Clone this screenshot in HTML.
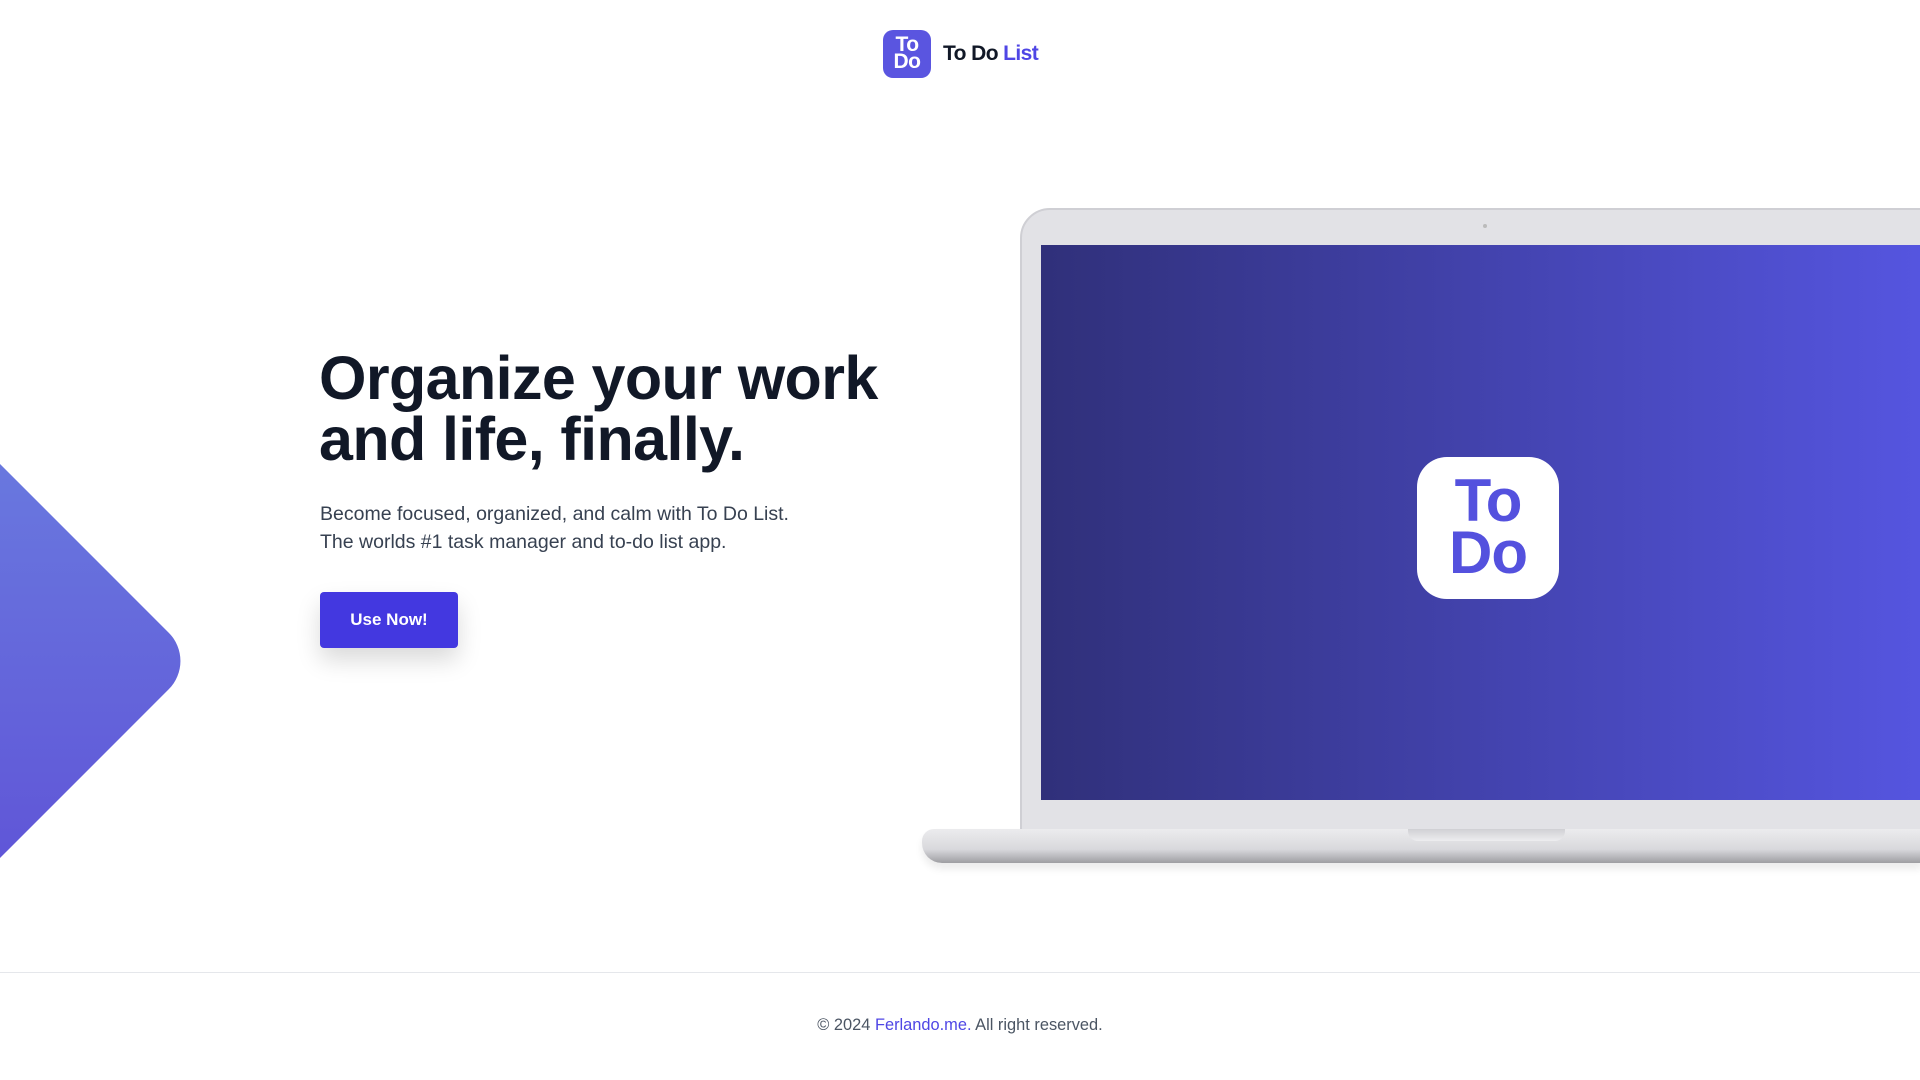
<!DOCTYPE html>
<html><head><meta charset="utf-8"><style>
*{margin:0;padding:0;box-sizing:border-box}
body{width:1920px;height:1080px;overflow:hidden;background:#fff;font-family:"Liberation Sans",Arial,sans-serif;position:relative}
.logo{position:absolute;left:883px;top:30px;width:48px;height:48px;border-radius:10px;background:#5a55e0;color:#fff;font-weight:bold;font-size:21px;line-height:17px;text-align:center;padding-top:6px;letter-spacing:-0.5px}
.brand{position:absolute;left:943px;top:42px;font-size:21px;font-weight:bold;color:#111827;letter-spacing:-0.6px}
.brand span{color:#4f46e5}
h1{position:absolute;left:319px;top:348px;font-size:61px;line-height:61px;font-weight:bold;color:#111827;letter-spacing:-0.6px}
p.sub{position:absolute;left:320px;top:500px;font-size:19.5px;line-height:28px;color:#374151}
.btn{position:absolute;left:320px;top:592px;width:138px;height:56px;background:#4338e0;border-radius:4px;color:#fff;font-weight:bold;font-size:17px;text-align:center;line-height:56px;box-shadow:0 12px 24px rgba(0,0,0,.15)}
.diamond{position:absolute;left:-281px;top:463px;width:396px;height:396px;transform:rotate(45deg);transform-origin:center;border-radius:40px;background:linear-gradient(315deg,#5e4fd6,#6b7fe0)}
.dwrap{position:absolute;left:0;top:0;width:400px;height:1000px;overflow:hidden}
.bezel{position:absolute;left:1020px;top:208px;width:960px;height:624px;background:#e2e2e6;border:2px solid #cfcfd4;border-radius:30px 0 0 0}
.screen{position:absolute;left:1041px;top:245px;width:900px;height:555px;background:linear-gradient(90deg,#30307a,#5656e2)}
.cam{position:absolute;left:1483px;top:224px;width:4px;height:4px;border-radius:50%;background:#bbb}
.base{position:absolute;left:922px;top:829px;width:1000px;height:34px;background:linear-gradient(#ececee,#d8d8dc 60%,#9e9ea2);border-radius:12px 0 0 20px;box-shadow:0 6px 8px rgba(0,0,0,.08)}
.notch{position:absolute;left:1408px;top:829px;width:157px;height:12px;background:linear-gradient(#d0d0d4,#ededef);border-radius:0 0 10px 10px}
.app{position:absolute;left:1417px;top:457px;width:142px;height:142px;background:#fff;border-radius:30px;color:#5451de;font-weight:bold;font-size:60px;line-height:52px;text-align:center;padding-top:18px;letter-spacing:-1px}
.hr{position:absolute;left:0;top:972px;width:1920px;height:1px;background:#e5e7eb}
.foot{position:absolute;left:0;width:1920px;top:1016px;text-align:center;font-size:16.4px;color:#4b5563}
.foot span{color:#4f46e5}
</style></head><body>
<div class="logo">To<br>Do</div>
<div class="brand">To Do <span>List</span></div>
<h1>Organize your work<br>and life, finally.</h1>
<p class="sub">Become focused, organized, and calm with To Do List.<br>The worlds #1 task manager and to-do list app.</p>
<div class="btn">Use Now!</div>
<div class="dwrap"><div class="diamond"></div></div>
<div class="bezel"></div>
<div class="cam"></div>
<div class="screen"></div>
<div class="app">To<br>Do</div>
<div class="base"></div>
<div class="notch"></div>
<div class="hr"></div>
<div class="foot">© 2024 <span>Ferlando.me.</span> All right reserved.</div>
</body></html>
